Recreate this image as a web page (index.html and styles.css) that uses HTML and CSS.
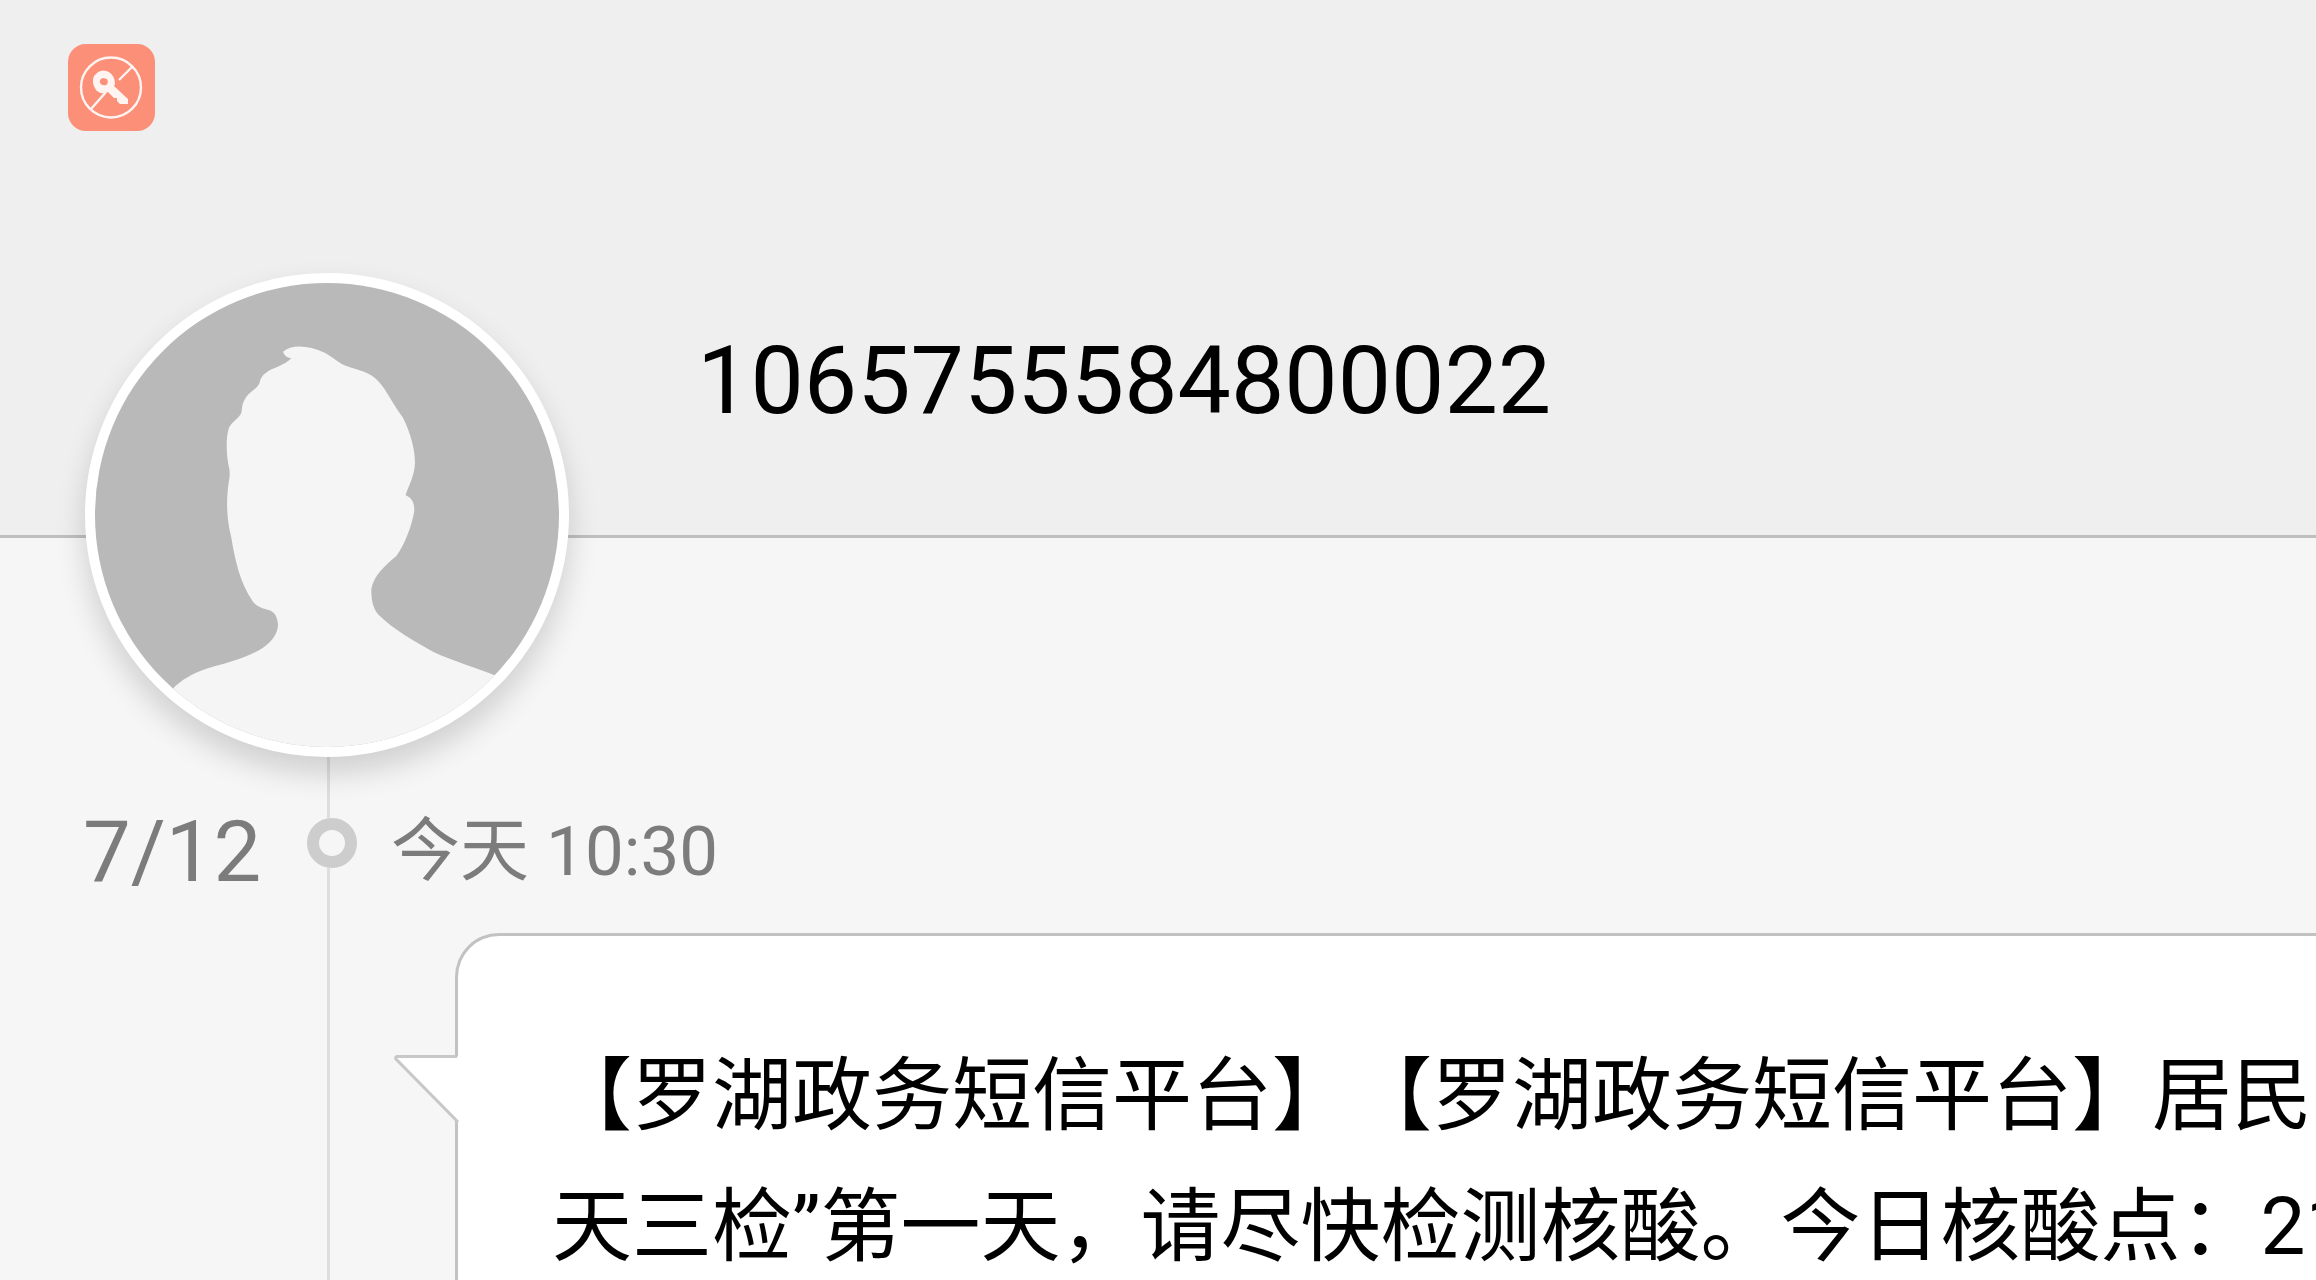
FILE: index.html
```html
<!DOCTYPE html>
<html lang="zh-CN">
<head>
<meta charset="utf-8">
<meta name="viewport" content="width=device-width, initial-scale=1">
<title>1065755584800022</title>
<link rel="stylesheet" href="styles.css">
</head>
<body>
<header class="header">
  <svg class="app-icon" viewBox="0 0 87 87" aria-hidden="true">
    <rect width="87" height="87" rx="18" fill="#fb8f78"/>
    <g fill="none" stroke="#fff4f1" stroke-width="2.4">
      <circle cx="43" cy="43.500" r="30"/>
      <path d="M23 65L38 48M51 36L64 23"/>
    </g>
    <path fill="#fff4f1" fill-rule="evenodd" d="M30 28Q35 25 41 28Q47 32 47 40L46 42L60 55V60H52L49 57V54H46L40 48Q32 51 28 46Q23 38 26 32ZM35 34Q31 35 32 39Q34 42 38 41Q41 39 39 35Z"/>
  </svg>
  <div class="contact">
    <div class="avatar">
      <svg class="avatar-image" viewBox="76 66 1392 1392" aria-hidden="true">
        <rect x="76" y="66" width="1392" height="1392" fill="#b9b9b9"/>
        <path fill="#f5f5f5" d="M640 272C665 250 715 252 765 275C790 288 805 305 830 315C865 328 900 332 925 360C950 385 960 415 1000 470C1025 520 1036 570 1036 605C1034 650 1015 675 1008 703C1030 712 1034 730 1034 750C1025 800 1005 850 980 885C950 910 910 945 905 985C905 1020 910 1040 925 1060C970 1105 1040 1145 1090 1172C1150 1200 1220 1220 1275 1243L1500 1500H250L312 1280C335 1258 365 1238 410 1223C470 1205 530 1192 580 1160C610 1140 625 1115 625 1090C622 1065 615 1055 600 1048C580 1042 565 1040 550 1022C510 965 495 890 485 830C475 790 468 740 475 680C478 655 484 640 476 610C470 575 468 530 478 500C488 480 510 470 515 455C518 440 515 430 530 407C545 390 565 380 570 365C573 350 580 340 600 328C620 318 645 312 665 292C652 290 643 282 640 272Z"/>
      </svg>
    </div>
    <h1 class="number">1065755584800022</h1>
  </div>
</header>
<main class="thread">
  <div class="date">7/12</div>
  <div class="rail"><span class="rail-start"></span><span class="dot"></span><span class="rail-rest"></span></div>
  <div class="entry">
    <time class="time">今天 10:30</time>
    <article class="bubble">
      <svg class="tail" viewBox="0 0 66 68" aria-hidden="true">
        <path d="M66 1.500H3Q1 2 2 4L63 66H66Z" fill="#fff"/>
        <path d="M63 1.500H3Q1 2 2 4L64 67" fill="none" stroke="#c8c8c8" stroke-width="3"/>
      </svg>
      <p class="message">【罗湖政务短信平台】【罗湖政务短信平台】居民<br>天三检”第一天，请尽快检测核酸。今日核酸点：21</p>
    </article>
  </div>
</main>
</body>
</html>
```
FILE: styles.css
```css
* {
  box-sizing: border-box;
}

body {
  display: flex;
  flex-direction: column;
  height: 100vh;
  margin: 0;
  overflow: hidden;
  background: #f6f6f6;
  color: #000;
  font-family: Roboto, "Noto Sans CJK SC", sans-serif;
}

.header {
  height: 538px;
  flex: none;
  padding: 44px 68px 0;
  background: #efefef;
  border-bottom: 3px solid #bfbfbf;
}

.app-icon {
  display: block;
  width: 87px;
  height: 87px;
}

.contact {
  display: flex;
  align-items: flex-start;
  gap: 128px;
  margin: 142px 0 0 17px;
}

.avatar {
  position: relative;
  z-index: 1;
  flex: none;
  width: 484px;
  height: 484px;
  border: 10px solid #fff;
  border-radius: 50%;
  background: #fff;
  box-shadow: 0 16px 30px rgba(0, 0, 0, 0.16);
}

.avatar-image {
  display: block;
  width: 100%;
  height: 100%;
  border-radius: 50%;
}

.number {
  margin: 0;
  padding-top: 52px;
  font-size: 95px;
  font-weight: 400;
  line-height: 112px;
}

.thread {
  display: grid;
  grid-template-columns: 307px 50px 1fr;
  flex: 1;
}

.date {
  padding: 264px 0 0 83px;
  color: #7c7c7c;
  font-size: 85px;
  line-height: 100px;
}

.rail {
  display: flex;
  flex-direction: column;
}

.rail-start,
.rail-rest {
  width: 3px;
  margin-left: 20px;
  background: #dedede;
}

.rail-start {
  height: 280px;
}

.rail-rest {
  flex: 1;
}

.dot {
  width: 50px;
  height: 50px;
  border: 12px solid #cdcdcd;
  border-radius: 50%;
}

.entry {
  display: flex;
  flex-direction: column;
  min-width: 0;
}

.time {
  padding: 264px 0 0 34px;
  color: #7c7c7c;
  font-size: 69px;
  line-height: 100px;
}

.bubble {
  position: relative;
  flex: 1;
  margin: 31px 0 0 98px;
  padding: 95px 0 0 94px;
  border: solid #c2c2c2;
  border-width: 3px 0 0 3px;
  border-top-left-radius: 44px;
  background: #fff;
}

.tail {
  position: absolute;
  top: 119px;
  left: -64px;
  width: 66px;
  height: 68px;
}

.message {
  margin: 0;
  font-size: 80px;
  line-height: 131px;
  white-space: nowrap;
  text-spacing-trim: space-all;
}
```
